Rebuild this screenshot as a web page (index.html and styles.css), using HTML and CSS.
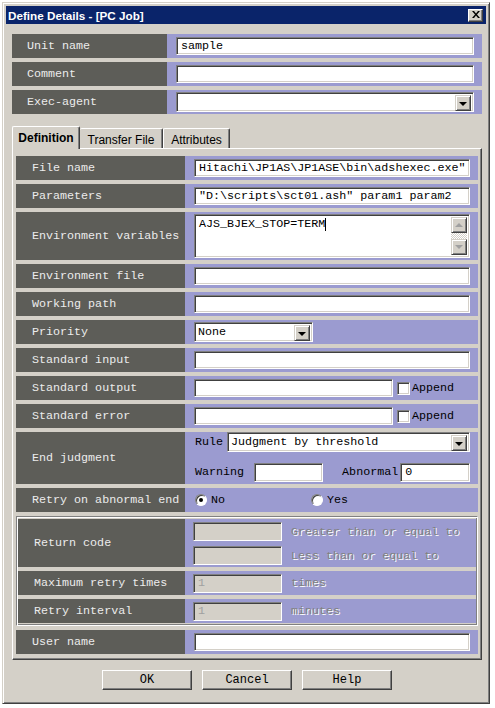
FILE: index.html
```html
<!DOCTYPE html>
<html>
<head>
<meta charset="utf-8">
<link rel="stylesheet" href="styles.css">
</head>
<body>
<div class="window">
  <div class="titlebar">
    <span class="title">Define Details - [PC Job]</span>
    <span class="close"><svg width="8" height="7" viewBox="0 0 8 7"><path d="M0 0h2l2 2.5 2-2.5h2l-3 3.5 3 3.5h-2l-2-2.5-2 2.5h-2l3-3.5z" fill="#000"/></svg></span>
  </div>
  <div class="content">
    <div class="rows top">
      <div class="row"><div class="label">Unit name</div><div class="field"><div class="input wide">sample</div></div></div>
      <div class="row"><div class="label">Comment</div><div class="field"><div class="input wide"></div></div></div>
      <div class="row"><div class="label">Exec-agent</div><div class="field"><div class="input wide combo"><span class="ddbtn"><span class="tri"></span></span></div></div></div>
    </div>

    <div class="tabs">
      <div class="tab active">Definition</div>
      <div class="tab t2">Transfer File</div>
      <div class="tab t3">Attributes</div>
    </div>

    <div class="panel">
      <div class="rows">
        <div class="row"><div class="label">File name</div><div class="field"><div class="input pwide">Hitachi\JP1AS\JP1ASE\bin\adshexec.exe"</div></div></div>
        <div class="row"><div class="label">Parameters</div><div class="field"><div class="input pwide">"D:\scripts\sct01.ash" param1 param2</div></div></div>
        <div class="row tall"><div class="label">Environment variables</div><div class="field"><div class="textarea"><span class="ta-text">AJS_BJEX_STOP=TERM</span><span class="caret"></span><div class="vscroll"><span class="sbtn"><span class="tri-up"></span></span><span class="strack"></span><span class="sbtn"><span class="tri-dn"></span></span></div></div></div></div>
        <div class="row"><div class="label">Environment file</div><div class="field"><div class="input pwide"></div></div></div>
        <div class="row"><div class="label">Working path</div><div class="field"><div class="input pwide"></div></div></div>
        <div class="row"><div class="label">Priority</div><div class="field"><div class="input select prio">None<span class="ddbtn"><span class="tri"></span></span></div></div></div>
        <div class="row"><div class="label">Standard input</div><div class="field"><div class="input pwide"></div></div></div>
        <div class="row"><div class="label">Standard output</div><div class="field"><div class="input half"></div><span class="check"></span><span class="ftext">Append</span></div></div>
        <div class="row"><div class="label">Standard error</div><div class="field"><div class="input half"></div><span class="check"></span><span class="ftext">Append</span></div></div>
        <div class="row ej"><div class="label">End judgment</div><div class="field col">
          <div class="line"><span class="ftext">Rule</span><div class="input select rule">Judgment by threshold<span class="ddbtn"><span class="tri"></span></span></div></div>
          <div class="line l2"><span class="ftext">Warning</span><div class="input warn"></div><span class="ftext abn">Abnormal</span><div class="input abnin">0</div></div>
        </div></div>
        <div class="row"><div class="label">Retry on abnormal end</div><div class="field"><span class="ropt"><span class="radio on"></span><span class="ftext">No</span></span><span class="ropt"><span class="radio"></span><span class="ftext">Yes</span></span></div></div>

        <div class="group">
          <div class="rows">
            <div class="row tall"><div class="label">Return code</div><div class="field col rc">
              <div class="line"><div class="input dis"></div><span class="dtext">Greater than or equal to</span></div>
              <div class="line"><div class="input dis"></div><span class="dtext">Less than or equal to</span></div>
            </div></div>
            <div class="row"><div class="label">Maximum retry times</div><div class="field"><div class="input dis">1</div><span class="dtext">times</span></div></div>
            <div class="row"><div class="label">Retry interval</div><div class="field"><div class="input dis">1</div><span class="dtext">minutes</span></div></div>
          </div>
        </div>

        <div class="row"><div class="label">User name</div><div class="field"><div class="input pwide"></div></div></div>
      </div>
    </div>

    <div class="buttons">
      <div class="btn">OK</div>
      <div class="btn">Cancel</div>
      <div class="btn">Help</div>
    </div>
  </div>
</div>
</body>
</html>
```

FILE: styles.css
```css
* { box-sizing: border-box; }
body {
  margin: 0;
  background: #ffffff;
  font-family: "Liberation Mono", "Courier New", monospace;
  font-size: 11.7px;
}
.window {
  margin: 2px 0 0 2px;
  width: 488px;
  height: 702px;
  background: #d4d0c8;
  border: 1px solid;
  border-color: #d4d0c8 #404040 #404040 #d4d0c8;
  box-shadow: inset 1px 1px #ffffff, inset -1px -1px #808080;
  padding: 3px;
}
.titlebar {
  height: 18px;
  background: #0a246a;
  color: #ffffff;
  display: flex;
  align-items: center;
  justify-content: space-between;
  padding: 0 3px 0 2px;
  font-family: "Liberation Sans", Arial, sans-serif;
  font-weight: bold;
  font-size: 11.7px;
}
.close {
  width: 15px;
  height: 13px;
  background: #d4d0c8;
  border: 1px solid;
  border-color: #ffffff #404040 #404040 #ffffff;
  box-shadow: inset -1px -1px #808080;
  display: flex;
  align-items: center;
  justify-content: center;
  padding-bottom: 1px;
}
.close svg { display: block; }
.content { padding: 10px 4px 0 6px; }
.rows { display: flex; flex-direction: column; gap: 4px; }
.row { display: flex; height: 24px; }
.row.tall { height: 48px; }
.row.ej { height: 52px; }
.label {
  background: #5d5d58;
  color: #ececec;
  display: flex;
  align-items: center;
  padding-left: 16px;
  width: 169px;
  white-space: pre;
  flex: none;
}
.top .label { width: 155px; padding-left: 15px; }
.field {
  flex: 1;
  background: #9b9bd0;
  display: flex;
  align-items: center;
  padding-left: 9px;
  min-width: 0;
}
.input {
  height: 18px;
  background: #ffffff;
  border: 1px solid;
  border-color: #808080 #ffffff #ffffff #808080;
  box-shadow: inset 1px 1px #404040, inset -1px -1px #d4d0c8;
  padding: 0 0 0 4px;
  line-height: 16px;
  white-space: pre;
  overflow: hidden;
  color: #000;
  position: relative;
  flex: none;
}
.input.wide { width: 298px; }
.input.pwide { width: 276px; }
.input.half { width: 199px; }
.input.select { height: 20px; line-height: 18px; padding-left: 3px; }
.input.combo { height: 20px; }
.prio { width: 119px; }
.ddbtn {
  position: absolute;
  right: 2px;
  top: 2px;
  width: 16px;
  height: 16px;
  background: #d4d0c8;
  border: 1px solid;
  border-color: #d4d0c8 #404040 #404040 #d4d0c8;
  box-shadow: inset 1px 1px #ffffff, inset -1px -1px #808080;
  display: flex;
  align-items: center;
  justify-content: center;
}
.tri {
  width: 0; height: 0;
  border-left: 4px solid transparent;
  border-right: 4px solid transparent;
  border-top: 4px solid #000;
  margin-top: 1px;
}
.textarea {
  width: 276px;
  height: 44px;
  background: #ffffff;
  border: 1px solid;
  border-color: #808080 #ffffff #ffffff #808080;
  box-shadow: inset 1px 1px #404040, inset -1px -1px #d4d0c8;
  position: relative;
  padding: 2px 0 0 4px;
  line-height: 14px;
  flex: none;
  align-self: flex-start;
  margin-top: 2px;
  display: flex;
  align-items: flex-start;
}
.caret {
  display: inline-block;
  width: 1px;
  height: 13px;
  background: #000;
  margin-top: 1px;
}
.vscroll {
  position: absolute;
  right: 2px;
  top: 2px;
  bottom: 2px;
  width: 16px;
  display: flex;
  flex-direction: column;
}
.sbtn {
  height: 16px;
  background: #d4d0c8;
  border: 1px solid;
  border-color: #d4d0c8 #404040 #404040 #d4d0c8;
  box-shadow: inset 1px 1px #ffffff, inset -1px -1px #808080;
  display: flex;
  align-items: center;
  justify-content: center;
  flex: none;
}
.strack {
  flex: 1;
  background-color: #ffffff;
  background-image: repeating-conic-gradient(#d4d0c8 0 25%, #ffffff 0 50%);
  background-size: 2px 2px;
}
.tri-up, .tri-dn {
  width: 0; height: 0;
  border-left: 4px solid transparent;
  border-right: 4px solid transparent;
}
.tri-up { border-bottom: 4px solid #a0a0a0; }
.tri-dn { border-top: 4px solid #a0a0a0; }
.tabs {
  display: flex;
  align-items: flex-end;
  height: 22px;
  margin-top: 12px;
  font-family: "Liberation Sans", Arial, sans-serif;
  font-size: 12px;
  position: relative;
  z-index: 1;
}
.tab {
  height: 20px;
  background: #d4d0c8;
  border: 1px solid;
  border-bottom: none;
  border-color: #ffffff #404040 #404040 #ffffff;
  box-shadow: inset -1px 0 #808080;
  border-radius: 2px 2px 0 0;
  display: flex;
  align-items: center;
  justify-content: center;
  padding-top: 2px;
  color: #000;
}
.tab.active {
  width: 68px;
  height: 23px;
  margin-bottom: -1px;
  font-weight: bold;
  padding-top: 0;
}
.tab.t2 { width: 83px; border-left: none; }
.tab.t3 { width: 67px; }
.panel {
  border: 1px solid;
  border-color: #ffffff #404040 #404040 #ffffff;
  box-shadow: inset -1px -1px #808080;
  padding: 7px 3px 5px 3px;
}
.check {
  width: 13px;
  height: 13px;
  background: #ffffff;
  border: 1px solid;
  border-color: #808080 #ffffff #ffffff #808080;
  box-shadow: inset 1px 1px #404040, inset -1px -1px #d4d0c8;
  margin-left: 4px;
  flex: none;
}
.ftext { color: #000; white-space: pre; margin-left: 2px; }
.field.col {
  flex-direction: column;
  align-items: flex-start;
  justify-content: flex-start;
  padding-left: 10px;
}
.line { display: flex; align-items: center; height: 20px; }
.line .ftext { margin-left: 0; }
.line.l2 { margin-top: 10px; height: 20px; }
.rule { width: 243px; margin-left: 4px; }
.warn { width: 69px; height: 19px; margin-left: 10px; }
.line .abn { margin-left: 19px; }
.abnin { width: 70px; height: 19px; margin-left: 2px; }
.ropt { display: flex; align-items: center; width: 116px; }
.radio {
  width: 12px;
  height: 12px;
  border-radius: 50%;
  background: #ffffff;
  border: 1px solid;
  border-color: #808080 #ffffff #ffffff #808080;
  box-shadow: inset 1px 1px #404040;
  margin-left: 1px;
  margin-right: 2px;
  position: relative;
  flex: none;
}
.radio.on::after {
  content: "";
  position: absolute;
  left: 3px;
  top: 3px;
  width: 4px;
  height: 4px;
  border-radius: 50%;
  background: #000;
}
.group {
  border: 1px solid;
  border-color: #808080 #ffffff #ffffff #808080;
  box-shadow: inset 1px 1px #ffffff, inset -1px -1px #808080;
  padding: 2px 1px;
}
.group .label { width: 167px; }
.group .field { padding-left: 8px; }
.input.dis {
  width: 89px;
  height: 19px;
  background: #d4d0c8;
  color: #a0a0a0;
  line-height: 17px;
}
.dtext {
  color: #808080;
  text-shadow: 1px 1px 0 #ffffff;
  margin-left: 9px;
  white-space: pre;
}
.field.rc { padding-left: 8px; padding-top: 3px; }
.field.rc .line { height: 19px; }
.field.rc .line + .line { margin-top: 5px; }
.buttons {
  display: flex;
  justify-content: center;
  gap: 10px;
  margin-top: 10px;
}
.btn {
  width: 90px;
  height: 20px;
  background: #d4d0c8;
  border: 1px solid;
  border-color: #ffffff #404040 #404040 #ffffff;
  box-shadow: inset -1px -1px #808080;
  display: flex;
  align-items: center;
  justify-content: center;
  font-size: 12px;
  color: #000;
}
```
